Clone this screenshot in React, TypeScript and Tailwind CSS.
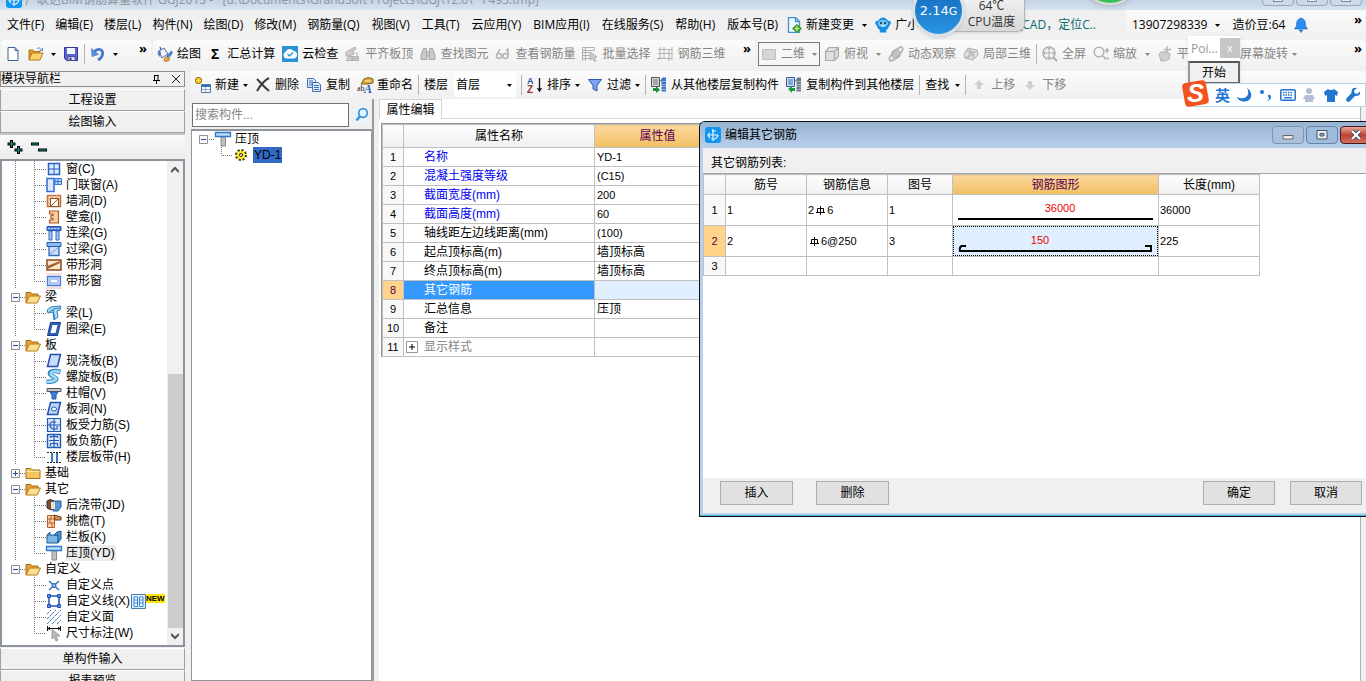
import type { ReactNode } from "react";

const UI = "font-['Open_Sans','Noto_Sans_CJK_SC',sans-serif]";
const SONG = "font-['Liberation_Sans','Noto_Sans_CJK_SC',sans-serif]";

const icons: Record<string, ReactNode> = {
  file: <path d="M3 1.5h7l3 3v10H3z M10 1.5v3h3" fill="#fdfeff" stroke="#3f618f" />,
  open: <g><path d="M1 14V4h4l1 1.5h6V8" fill="#d9982e" stroke="#b87a20" /><path d="M1 14 4 7h11l-3 7z" fill="#fbd36e" stroke="#b87a20" /><path d="M9 2.5q3-2 4 1M14.5 2v2.500h-3" fill="none" stroke="#5d7fae" /></g>,
  save: <g><path d="M1.500 1.500h13v13h-11l-2-2z" fill="#5c68d2" stroke="#3238a0" /><path d="M4 2h8v6H4z" fill="#f4f5ff" /><path d="M5 10.500h7v4H5z" fill="#dfe3ee" stroke="#2a2f80" strokeWidth=".7" /><path d="M6.500 11.500h2v2.500h-2z" fill="#333a90" /></g>,
  undo: <g><path d="M4 6C8 1.500 13.500 3 12.500 8.500 12 11 10 13 8 14" fill="none" stroke="#4478d0" strokeWidth="2.800" /><path d="M1.500 2.500 2 10.500l6.500-2z" fill="#5b92e2" stroke="#3c6fc4" strokeWidth=".6" /></g>,
  paint: <g><path d="m2 5 5-3 4 6-6 4z" fill="#eef3fb" stroke="#4a6b9c" /><path d="M1 4.500Q0 9 3 11L4 6z" fill="#567dbd" /><path d="M4 4 3 1M15 5l-5 6" stroke="#3f5e8c" strokeWidth="1.200" fill="none" /><path d="M7 15c0-4 3-5 5-3s-1 4-5 3z" fill="#e5a93a" stroke="#98651c" strokeWidth=".7" /><path d="m10 9 4-4 2 2-4 5z" fill="#4d84cf" /></g>,
  cloud: <g><path d="M0 0h16v16H0z" fill="#2b91d6" /><path d="M4 12.500a3.500 3.500 0 0 1-.5-6.500 4.500 4.500 0 0 1 8-1A3.800 3.800 0 0 1 12 12.500z" fill="#fff" /><path d="m5.500 8 2 2L11 6.500" fill="none" stroke="#2b91d6" strokeWidth="1.400" /></g>,
  align: <g fill="#d0d0d0" stroke="#b0b0b0"><path d="m1 6 9-5 1 2-5 3h3v2L4 10H1z" /><path d="M3.500 10.500h10v4h-12z M5 12.500h8M8 10.500v4M12 6v5" /></g>,
  find: <g fill="#c9c9c9" stroke="#a8a8a8"><path d="M3.500 2.500h3v4l.5 7H1V9z M9.500 2.500h3L15 9v4.500H9l.5-7z" /><path d="M6.500 6h3v4h-3z" /></g>,
  glasses: <g fill="none" stroke="#b4b4b4" strokeWidth="1.500"><circle cx="4" cy="10" r="2.500" /><circle cx="10.500" cy="10" r="2.500" /><path d="M1.500 9.500 5 3M13 10V3l-2 2M6.500 9.500h1.500" /></g>,
  batch: <g fill="none" stroke="#b0b0b0"><path d="M.5 1.500h12v3H.5z M.5 6.500h7M.5 9.500h7M.5 12.500h8M3.500 1v14M.5 1v14" /><path d="m8 6 7 5-3 .5 2 3-1.500 1-2-3L8 14z" fill="#ccc" /></g>,
  cage: <g fill="none" stroke="#b4b4b4"><path d="M3 1v12M7 1v12M12 3v12M15 1v13M1 3.500l14 0M1 7.500h14M0 12.500h13M1 14 4 11M12 14l3-3" /></g>,
  rect: <path d="M1.500 3.500h13v10h-13z" fill="#d6d6d6" stroke="#c0c0c0" />,
  cube: <path d="M1.500 5.500 5 1.500h9.500v9l-4 4h-9z M1.500 5.500h9v9M10.500 5.500l4-4" fill="#dedede" stroke="#aaa" strokeWidth="1.200" />,
  orbit: <g fill="#c4c4c4" stroke="#b2b2b2"><circle cx="8" cy="8" r="4.500" /><ellipse cx="8" cy="8" rx="9" ry="3" transform="rotate(-45 8 8)" fill="none" strokeWidth="1.500" /></g>,
  region: <path d="m1 8 4-6 9 2 1 5-5 5-8-2z M5 2l4 7M9 9 2 12M9 9l5-5M3 5l8 2M5 12 8 4M11 13l-1-8" fill="#dedede" stroke="#b2b2b2" />,
  full: <g fill="none" stroke="#adadad"><circle cx="7" cy="7" r="6" strokeWidth="1.500" /><path d="M7 2v10M2 7h10M5.500 3.500 7 2l1.500 1.500M5.500 10.500 7 12l1.500-1.500M3.500 5.500 2 7l1.500 1.500M10.500 5.500 12 7l-1.500 1.500" /><path d="m11.500 11.500 3.500 3.500" strokeWidth="2" /></g>,
  zoom: <g fill="none" stroke="#b2b2b2"><circle cx="6" cy="6" r="4.800" strokeWidth="1.500" /><path d="m10 10 2 2M14 2v5M11.500 4.500H16M11 12.500h5" strokeWidth="1.500" /></g>,
  pan: <g fill="#cfcfcf" stroke="#b2b2b2"><path d="M2 8c1-3 9-3 11 0l-1 5-4 2H4z" /><path d="M10 0v7M7 3.500h7" strokeWidth="1.300" /></g>,
  create: <g><path d="M3.500 0v7M0 3.500h7" stroke="#a57b0e" strokeWidth="4" /><path d="M3.500 1v5M1 3.500h5" stroke="#ffe23f" strokeWidth="2" /><path d="M6.500 7.500h9v8h-9z" fill="#f8fbff" stroke="#56789f" /><path d="M7 8h8v2H7z" fill="#2f70c7" /><path d="M7 12.500h8M10.500 10v5" stroke="#91abc8" /></g>,
  remove: <path d="M2 2c3 3 6 7 12 12M14 1C10 3 5 9 2 14" fill="none" stroke="#3b3b3b" strokeWidth="2" />,
  copy: <g fill="#dceafe" stroke="#456fb4"><path d="M1.500 1.500h6l2 2v7h-8z M3 4h4M3 6h5M3 8h5" /><path d="M6.500 5.500h6l2 2v7h-8z M8 8.500h5M8 10.500h5M8 12.500h5" /></g>,
  rename: <g><path d="m4 7 3-5q5-3 9 0v4l-5 1z" fill="#d8a638" stroke="#7c601c" /><path d="M8 4h6" stroke="#fff0b0" /><text x="0" y="14" fontSize="8" fontFamily="Liberation Serif" fill="#222">ab</text><text x="7" y="16" fontSize="12" fontStyle="italic" fontWeight="bold" fontFamily="Liberation Serif" fill="#2761c1">A</text></g>,
  sort: <g><text x="0" y="7" fontSize="9" fontWeight="bold" fontFamily="Liberation Sans" fill="#2a5aa5">A</text><text x="0" y="16" fontSize="10" fontWeight="bold" fontFamily="Liberation Sans" fill="#9d3535">Z</text><path d="M12.500 1v13M10.500 11l2 3 2-3" fill="none" stroke="#111" strokeWidth="1.300" /></g>,
  filter: <path d="M1.500 2.500h13L10 8.500V14l-4-2V8.500z" fill="#7da4f0" stroke="#2855ae" />,
  copyFrom: <g><path d="M.5.5h8v9h-8z" fill="#d7d7d7" stroke="#555" /><path d="M2 3h5M2 5h5M2 7h5" stroke="#777" /><path d="M15 1.500h-3l-1.500 2H15M10.500 6H15M10.500 8.500H15M10.500 11H15M10.500 13.500H15" stroke="#3976c6" fill="none" strokeWidth="1.800" /><path d="m2 12 4-3v2h3v3H6v2z" fill="#16913c" transform="rotate(180 5.500 12.500)" /></g>,
  copyTo: <g><path d="M.5.5h8v9h-8z" fill="#cfe0fa" stroke="#31589b" /><path d="M2 3h5M2 5h5M2 7h5" stroke="#456aaa" /><path d="M15 1.500h-3l-1.500 2H15M10.500 6H15M10.500 8.500H15M10.500 11H15M10.500 13.500H15" stroke="#68798c" fill="none" strokeWidth="1.800" /><path d="m2 12 4-3v2h3v3H6v2z" fill="#16a13c" /></g>,
  up: <path d="m8 3 5 5h-3v4H6V8H3z" fill="#cfcfcf" />,
  down: <path d="m8 13 5-5h-3V4H6v4H3z" fill="#cfcfcf" />,
  change: <g><path d="M2.500.5h7l4 4v11h-11z M9.500.5v4h4" fill="#f4faff" stroke="#3f91cf" strokeWidth="1.300" /><path d="m11 7 5 4.500L11 16l-5-4.500z" fill="#359920" /><path d="M11 9v5M8.500 11.500h5" stroke="#b8ef8e" strokeWidth="1.400" /></g>,
  robot: <g><path d="M0 6q1-3 3-2 2-3.500 5-3.500T13 4q2-1 3 2l-2 3.500q-1 3-3 3.500l.5 2.500h-7L5 13Q3 12.500 2 9.500z" fill="#168de2" /><ellipse cx="8" cy="6.500" rx="5" ry="3.500" fill="#74c8f6" /><circle cx="6" cy="6" r="1" fill="#123" /><circle cx="10" cy="6" r="1" fill="#123" /><path d="M6 8.500q2 1.500 4 0" stroke="#fff" fill="none" /></g>,
  bell: <path d="M8 1q5 1 4.500 8l2 3h-13l2-3Q3 2 8 1zM6 13h4l-2 2.500z" fill="#2a8df1" stroke="#1469bd" strokeWidth=".6" />,
  folderOpen: <g><path d="M1 14V3.500h5L7 5h6v3" fill="#e0a53c" stroke="#a8701c" /><path d="M1 14 4.500 7h11L12 14z" fill="#fde08a" stroke="#b87a20" /></g>,
  folder: <g><path d="M1 13.500v-10h5L7.500 5H15v8.500z" fill="#f3c55c" stroke="#a8701c" /><path d="M1.500 6.500h13" stroke="#fdeab1" /></g>,
  win: <g><path d="M2.500 2.500h11v11h-11z" fill="#dcebff" stroke="#2a5fc8" strokeWidth="1.500" /><path d="M8 3v10M3 8h10" stroke="#2a5fc8" /></g>,
  doorwin: <g><path d="M1 1.500h7v13H1z" fill="#dceaff" stroke="#3970d6" strokeWidth="1.600" /><path d="M9 1.500h6.500v6H9z M12 1v7M9 4.500h6" fill="#bcd5ff" stroke="#3970d6" /></g>,
  hole: <g><path d="M1.500 2.500h13v11h-13z" fill="#fbd7b5" stroke="#c07340" strokeWidth="1.500" /><path d="M2 6h12M2 10h12M6 2v12M11 2v12" stroke="#e4a77a" /><path d="M4.500 5.500h8v8h-8z" fill="#fffdf7" stroke="#8b5122" /><path d="m5 13 7-7" stroke="#9b5a23" /></g>,
  niche: <path d="M3.500 2h9v12h-9v-3H7V9.500H5v-3h2V5H3.500z" fill="#f8cda6" stroke="#b35a20" strokeWidth="1.200" />,
  linkBeam: <g><path d="M1 1.500h14v4H1z" fill="#4b80d8" stroke="#2452aa" /><path d="M3 6h3v9H3z M10 6h3v9h-3z" fill="#a8c8f5" stroke="#3569c1" /><path d="M2 3.500h12" stroke="#bad4ff" strokeDasharray="2 1" /></g>,
  lintel: <g><path d="M3 5h10v9.500H3z" fill="#cfe0fa" stroke="#2e68b8" strokeWidth="1.300" /><path d="M1 1.500h14v4H1z" fill="#8dbcf2" stroke="#2459aa" /><path d="m4 13 8-6" stroke="#6aa0dc" /></g>,
  stripHole: <g><path d="M1 3h14v10H1z" fill="#fbe6ce" stroke="#8a4a1c" strokeWidth="1.500" /><path d="M1.500 12V9L14 4v2z" fill="#a85c28" /></g>,
  stripWin: <g><path d="M1.500 3.500h13v9h-13z" fill="#cfe1ff" stroke="#4979d8" strokeWidth="1.300" /><path d="M4 6h8v4H4z" fill="#fff" stroke="#7aa3e8" /><path d="M0 1h16M0 15h16" stroke="#f3b7ab" /></g>,
  beam: <g fill="#b5dcf5" stroke="#2782be"><path d="m1 5 4-3 10-1-1 4-3 1 1 6-4 3-1-8-5 1z" /><path d="m3 7 5-3 6-1M7 5l2 9" fill="none" /></g>,
  ring: <g><path d="M4.500 1.500h10l-3 13h-10z" fill="#315fb8" stroke="#173f91" /><path d="M6.500 4h5l-2 8h-5z" fill="#fff" /></g>,
  slab: <path d="M4.500 1.500h10l-3 12h-10z" fill="#c9dcfa" stroke="#1e50b0" strokeWidth="1.500" />,
  spiral: <g fill="none"><path d="M14.500 3C4 0 1 5 7 7.500s3 5-6.500 5.500" stroke="#2887c6" strokeWidth="4.500" /><path d="M14 3C5 .5 2 5 7.500 7.500S9.500 12.500 1 13" stroke="#a8daf6" strokeWidth="2.600" /></g>,
  cap: <g><path d="M1 3.500h14v3H1z" fill="#c8c8c8" stroke="#555" /><path d="M4 7h8l-2 3v4H6v-4z" fill="#3e84db" stroke="#2459aa" /></g>,
  slabHole: <g><path d="M4.500 1.500h10l-3 12h-10z" fill="#bfd6fa" stroke="#1e50b0" strokeWidth="1.500" /><ellipse cx="8" cy="8" rx="2.500" ry="2" fill="#fff" stroke="#2358b5" /></g>,
  forceBar: <g fill="none" stroke="#205ab3"><path d="M1.500 1.500h13v13h-13z" fill="#d8e6fa" strokeWidth="1.200" /><path d="M8 2v12M2 8h12M10 5H6q-2 0-2 3t3 4h4V9" strokeWidth="1.100" /></g>,
  negBar: <g fill="none" stroke="#205ab3"><path d="M1.500 1.500h13v13h-13z" fill="#dae8fb" strokeWidth="1.400" /><path d="M3 7.500h10M8 2v12M4.500 13v-2.500h7V13M4.500 5V3.500h7V5" strokeWidth="1.200" /></g>,
  band: <g fill="none" stroke="#2b66b8"><path d="M1 3.500h14M1 13.500h14" stroke="#222" strokeDasharray="2 1" /><path d="M6 4v9M11 4v9" strokeWidth="1.800" /></g>,
  postCast: <g><path d="M1 4q3-3 7 0v8q-3 2-7-1z" fill="#7a4d32" stroke="#492c1d" /><path d="M7 4h8v6l-3 4H7z" fill="#5394d7" stroke="#285f9d" /><path d="M5 5h4v7H5z" fill="#eedecb" /></g>,
  eave: <g><path d="M1.500 2.500h7v12h-7z M2 6h6M2 10h6M5 2v4M4 6v4M6 10v4" fill="#fbd1a9" stroke="#b35f2b" /><path d="m8 2 7 2v3H9z" fill="#d08d59" stroke="#713d1c" /></g>,
  rail: <g><path d="M1 6h11v8H1z" fill="#7cb8e7" stroke="#205a94" /><path d="m1 6 3-3v3M8 6l3-3 4-1v8l-3 4V6z" fill="#4b90cf" stroke="#205a94" /></g>,
  coping: <g><path d="M6 6h4.500v9H6z" fill="#c0c0c0" stroke="#8a8a8a" /><path d="M.5 1.500h15v4H.5z" fill="#b9dcf8" stroke="#3178c7" strokeWidth="1.300" /></g>,
  point: <g><path d="m3 4 10 9M13 4 3 13" stroke="#2d67ae" strokeWidth="1.300" /><circle cx="8" cy="8.500" r="2" fill="#7ebcf0" stroke="#205ea9" /></g>,
  line: <g stroke="#2054b2"><path d="M3 3h10v10H3z" fill="none" strokeWidth="1.500" /><path d="M1.500 1.500h3v3h-3zM11.500 1.500h3v3h-3zM1.500 11.500h3v3h-3zM11.500 11.500h3v3h-3z" fill="#5590e5" /></g>,
  area: <path d="m1 5 4-4M1 10l9-9M1 15 15 1M6 15l9-9M11 15l4-4" stroke="#4a78c2" strokeDasharray="3 .7" />,
  dim: <g><path d="M1.500 1v5M14.500 1v5M1 3.500h14M4 2 2 3.500 4 5M12 2l2 1.500L12 5" stroke="#111" fill="none" /><path d="m6 4 8 7h-4l2 4-2 1-2-4-2 2z" fill="#bbb" stroke="#888" strokeWidth=".7" /></g>,
  gear: <g><circle cx="8" cy="8" r="4.500" fill="#ffe71c" stroke="#3f3b00" strokeWidth="3" strokeDasharray="2 1.500" /><circle cx="8" cy="8" r="4" fill="#ffeb25" /><circle cx="8" cy="8" r="1.500" fill="#fff" stroke="#222" /></g>,
  search: <g fill="none" stroke="#3a94da"><circle cx="9" cy="6" r="4.300" strokeWidth="1.800" fill="#e6f5ff" /><path d="m6 9-3.500 4.500" strokeWidth="2.500" /></g>,
  app: <g><rect width="16" height="16" rx="3" fill="#1195ee" /><path d="M8 2v12M3 8h10M5 6Q3 7 3 8t2 3M7 4h4M6 12h4q3-2 3-4" stroke="#e9f8ff" fill="none" strokeWidth="1.200" /></g>,
  moon: <path d="M11 1c4 7-2 13-10 9 1 5 12 7 14 0 1-4-1-7-4-9z" fill="#2176d2" />,
  punct: <g fill="#2176d2"><circle cx="4" cy="5" r="2" /><path d="M10 8q3-1 3 2 0 3-4 4 2-1 2-3-1 0-1-3z" /></g>,
  keys: <g><rect x=".8" y="2.800" width="14.400" height="10.400" rx="1" fill="#fff" stroke="#2176d2" strokeWidth="1.500" /><path d="M3 5.500h10M3 8h10" stroke="#2176d2" strokeWidth="1.400" strokeDasharray="1.500 1" /><path d="M4 10.800h8" stroke="#2176d2" strokeWidth="1.400" /></g>,
  person: <path d="M8 1a3 3 0 1 1 0 6 3 3 0 0 1 0-6zM4 8h8l2 4H12v3H4v-3H2z" fill="#b3bed2" />,
  shirt: <path d="M5 2q3 2 6 0l4 3-1 4-2-1v7H4V8L2 9 1 5z" fill="#2176d2" />,
  wrench: <path d="M15 4.500 12 7 9.500 6 9 3.500 12 1Q6 0 6.500 6L1 12q0 3 3 3l6-6q6 0 5-4.500z" fill="#2176d2" />,
};

function Ico({ n }: { n: string }) {
  return <svg aria-hidden="true" className="size-4 shrink-0 overflow-visible" viewBox="0 0 16 16">{icons[n]}</svg>;
}

function Caret() {
  return <svg aria-hidden="true" className="h-[3px] w-[5px] shrink-0" viewBox="0 0 5 3"><path d="M0 0h5L2.500 3z" fill="currentColor" /></svg>;
}

function Sep({ tight }: { tight?: boolean }) {
  return <span className={"h-5 w-px shrink-0 bg-[#b4b4b4]" + (tight ? " -mx-0.5" : "")} />;
}

function More() {
  return <button aria-label="更多" className="pb-3 text-[13px] leading-none font-bold">»</button>;
}

function Tool({ icon, label, gray, caret }: { icon: string; label: string; gray?: boolean; caret?: boolean }) {
  return (
    <button className={"flex shrink-0 items-center gap-1 whitespace-nowrap " + (gray ? "text-[#858585]" : "text-black")}>
      <Ico n={icon} />
      <span>{label}</span>
      {caret && <Caret />}
    </button>
  );
}

const editMenus = ["文件(F)", "编辑(E)", "楼层(L)", "构件(N)", "绘图(D)", "修改(M)", "钢筋量(Q)"];
const serviceMenus = ["视图(V)", "工具(T)", "云应用(Y)", "BIM应用(I)", "在线服务(S)", "帮助(H)", "版本号(B)"];

function MenuBar() {
  return (
    <nav className="flex h-[30px] shrink-0 items-center bg-[#f0f0f0]">
      <div className="flex min-w-0 flex-1 items-center gap-3 overflow-hidden pl-[7px] whitespace-nowrap">
        <div className="flex shrink-0 gap-[11px]">
          {editMenus.map((m) => <button key={m} className="shrink-0">{m}</button>)}
        </div>
        <div className="flex shrink-0 gap-3">
          {serviceMenus.map((m) => <button key={m} className="shrink-0">{m}</button>)}
        </div>
        <div className="-ml-1 flex items-center gap-2">
          <Tool icon="change" label="新建变更" />
          <Caret />
          <Tool icon="robot" label="广小" />
        </div>
        <a href="#cad" className="ml-auto pr-[30px] text-[#0a6b70]">_CAD，定位C..</a>
      </div>
      <div className="flex h-full w-[240px] shrink-0 items-center gap-2 bg-linear-to-b from-[#fafafa] to-[#f0f0f0] pl-[6px]">
        <button className="flex items-center gap-2">13907298339<Caret /></button>
        <span className="pl-1">造价豆:64</span>
        <Ico n="bell" />
        <span className="ml-auto pr-1"><More /></span>
      </div>
    </nav>
  );
}

const bar = "flex items-center rounded bg-linear-to-b from-[#fbfbfb] to-[#f0f0f0]";

function MainToolbar() {
  return (
    <div className="flex h-7 shrink-0 gap-[2px] overflow-hidden pl-px">
      <div className={bar + " w-[150px] shrink-0 gap-[7px] pl-1"}>
        <button aria-label="新建"><Ico n="file" /></button>
        <button aria-label="打开" className="flex items-center gap-[7px]"><Ico n="open" /><Caret /></button>
        <button aria-label="保存"><Ico n="save" /></button>
        <Sep tight />
        <button aria-label="撤销" className="flex items-center gap-[7px]"><Ico n="undo" /><Caret /></button>
        <span className="ml-auto pr-1"><More /></span>
      </div>
      <div className={bar + " w-[602px] shrink-0 gap-[7px] pl-1"}>
        <Tool icon="paint" label="绘图" />
        <button className="flex items-center gap-2 pl-[3px]"><span className="text-[14px] leading-none font-bold">Σ</span>汇总计算</button>
        <Tool icon="cloud" label="云检查" />
        <Tool icon="align" label="平齐板顶" gray />
        <Tool icon="find" label="查找图元" gray />
        <Tool icon="glasses" label="查看钢筋量" gray />
        <Tool icon="batch" label="批量选择" gray />
        <Tool icon="cage" label="钢筋三维" gray />
        <span className="ml-auto pr-1"><More /></span>
      </div>
      <div className={bar + " min-w-0 flex-1 gap-[7px] pl-px"}>
        <div className="-mr-[3px] flex h-6 w-[62px] shrink-0 items-center gap-1 border border-[#777] bg-[#f6f6f6] px-[2px] text-[#858585]">
          <Ico n="rect" />
          <select aria-label="视图模式" className="min-w-0 flex-1 appearance-none bg-transparent"><option>二维</option></select>
          <Caret />
        </div>
        <span className="flex items-center gap-2 text-[#858585]"><Tool icon="cube" label="俯视" gray /><Caret /></span>
        <Tool icon="orbit" label="动态观察" gray />
        <Tool icon="region" label="局部三维" gray />
        <Sep tight />
        <Tool icon="full" label="全屏" gray />
        <span className="flex items-center gap-2 text-[#858585]"><Tool icon="zoom" label="缩放" gray /><Caret /></span>
        <Tool icon="pan" label="平移" gray />
        <span className="pl-3"><Tool icon="orbit" label="屏幕旋转" gray caret /></span>
        <span className="ml-auto pr-1"><More /></span>
      </div>
    </div>
  );
}

function PartToolbar() {
  return (
    <div className={bar + " h-7 shrink-0 gap-[7px] overflow-hidden pl-1"}>
      <Tool icon="create" label="新建" caret />
      <Tool icon="remove" label="删除" />
      <Tool icon="copy" label="复制" />
      <Tool icon="rename" label="重命名" />
      <Sep tight />
      <label className="flex shrink-0 items-center gap-[6px]">
        <span>楼层</span>
        <span className="flex h-6 w-[62px] items-center bg-white pr-1 pl-[2px]">
          <select className="min-w-0 flex-1 appearance-none bg-transparent"><option>首层</option></select>
          <Caret />
        </span>
      </label>
      <Sep tight />
      <Tool icon="sort" label="排序" caret />
      <Tool icon="filter" label="过滤" caret />
      <Sep tight />
      <Tool icon="copyFrom" label="从其他楼层复制构件" />
      <Tool icon="copyTo" label="复制构件到其他楼层" />
      <Sep tight />
      <button className="flex shrink-0 items-center gap-[6px]">查找<Caret /></button>
      <Sep tight />
      <Tool icon="up" label="上移" gray />
      <Tool icon="down" label="下移" gray />
    </div>
  );
}

type Node = { t: string; i: string; sel?: boolean; isNew?: boolean };
type Group = { name?: string; closed?: boolean; last?: boolean; items: Node[] };

const tree: Group[] = [
  { items: [
    { t: "窗(C)", i: "win" }, { t: "门联窗(A)", i: "doorwin" }, { t: "墙洞(D)", i: "hole" }, { t: "壁龛(I)", i: "niche" },
    { t: "连梁(G)", i: "linkBeam" }, { t: "过梁(G)", i: "lintel" }, { t: "带形洞", i: "stripHole" }, { t: "带形窗", i: "stripWin" },
  ] },
  { name: "梁", items: [{ t: "梁(L)", i: "beam" }, { t: "圈梁(E)", i: "ring" }] },
  { name: "板", items: [
    { t: "现浇板(B)", i: "slab" }, { t: "螺旋板(B)", i: "spiral" }, { t: "柱帽(V)", i: "cap" }, { t: "板洞(N)", i: "slabHole" },
    { t: "板受力筋(S)", i: "forceBar" }, { t: "板负筋(F)", i: "negBar" }, { t: "楼层板带(H)", i: "band" },
  ] },
  { name: "基础", closed: true, items: [] },
  { name: "其它", items: [
    { t: "后浇带(JD)", i: "postCast" }, { t: "挑檐(T)", i: "eave" }, { t: "栏板(K)", i: "rail" }, { t: "压顶(YD)", i: "coping", sel: true },
  ] },
  { name: "自定义", last: true, items: [
    { t: "自定义点", i: "point" }, { t: "自定义线(X)", i: "line", isNew: true }, { t: "自定义面", i: "area" }, { t: "尺寸标注(W)", i: "dim" },
  ] },
];

function Expander({ plus }: { plus?: boolean }) {
  return (
    <svg aria-hidden="true" className="size-[9px] shrink-0" viewBox="0 0 9 9">
      <path d="M.5.5h8v8h-8z" fill="#f8f8f8" stroke="#8f8f8f" />
      <path d={plus ? "M2 4.500h5M4.500 2v5" : "M2 4.500h5"} stroke="#2a4fa0" />
    </svg>
  );
}

function Guide({ end, blank, stem }: { end?: boolean; blank?: boolean; stem?: boolean }) {
  return (
    <svg aria-hidden="true" className="h-4 w-3 shrink-0" viewBox="0 0 12 16">
      {!blank && <path d={stem ? "M.5 0v16" : end ? "M.5 0v8.500h11" : "M.5 0v16M1 8.500h11"} fill="none" stroke="#777" strokeDasharray="1 1" />}
    </svg>
  );
}

function NavTree() {
  return (
    <div className="flex h-[488px] shrink-0 border-2 border-[#8c939c] bg-white">
      <ul className="min-w-0 flex-1 overflow-hidden pl-[10px]">
        {tree.map((g, gi) => (
          <li key={gi}>
            {g.name && (
              <button className="-ml-px flex h-4 items-center whitespace-nowrap">
                <Expander plus={g.closed} />
                <span className="w-[5px] border-t border-dotted border-[#777]" />
                <Ico n={g.closed ? "folder" : "folderOpen"} />
                <span className="pl-1">{g.name}</span>
              </button>
            )}
            <ul>
              {g.items.map((n, k) => (
                <li key={n.t} className="flex h-4 items-center pl-[3px]">
                  <Guide stem blank={g.last} />
                  <span className="w-[7px] shrink-0" />
                  <Guide end={k === g.items.length - 1} />
                  <button className="flex h-4 items-center gap-1 whitespace-nowrap">
                    <Ico n={n.i} />
                    <span className={n.sel ? "bg-[#ececec] pr-px" : ""}>{n.t}</span>
                  </button>
                  {n.isNew && (
                    <span className="flex items-start pl-px">
                      <svg aria-hidden="true" className="size-[15px]" viewBox="0 0 15 15"><path d="M.5.5h14v14H.5z" fill="#d9edff" stroke="#4a7ca8" /><path d="M3 3h3.500v9.500H3zM8.500 3H12v9.500H8.500zM3 6h3M3 9h3M9 6h3M9 9h3" fill="#fff" stroke="#3388d6" /></svg>
                      <span className="bg-[#ffe600] text-[8px] leading-[9px] font-bold">NEW</span>
                    </span>
                  )}
                </li>
              ))}
            </ul>
          </li>
        ))}
      </ul>
      <div className="flex w-4 shrink-0 flex-col items-center bg-[#f0f0f0] py-[5px]">
        <svg aria-hidden="true" className="size-2" viewBox="0 0 8 8"><path d="m0 6 4-4 4 4" fill="none" stroke="#555" strokeWidth="2" /></svg>
        <div className="flex-1" />
        <div className="mb-1 h-[254px] w-[15px] bg-[#cdcdcd]" />
        <svg aria-hidden="true" className="size-2" viewBox="0 0 8 8"><path d="m0 2 4 4 4-4" fill="none" stroke="#555" strokeWidth="2" /></svg>
      </div>
    </div>
  );
}

const navBtn = "h-[22px] shrink-0 border border-t-white border-r-[#a0a0a0] border-b-[#a0a0a0] border-l-[#a0a0a0] bg-[#f0f0f0]";

function NavPanel() {
  return (
    <aside className={SONG + " mr-px flex w-[185px] shrink-0 flex-col overflow-hidden"}>
      <header className="mt-[2px] flex h-4 shrink-0 items-center border border-[#8a8f88] bg-[#f0f0f0]">
        <h2>模块导航栏</h2>
        <button aria-label="固定" className="ml-auto">
          <svg aria-hidden="true" className="h-[9px] w-[7px]" viewBox="0 0 7 9"><path d="M1.500 0v5M1.500.5h4M5 0v5M0 5.500h7M3.500 6v3" stroke="#000" fill="none" /></svg>
        </button>
        <button aria-label="关闭" className="mr-1 ml-3">
          <svg aria-hidden="true" className="size-2" viewBox="0 0 8 8"><path d="m0 0 8 8M8 0 0 8" stroke="#222" /></svg>
        </button>
      </header>
      <button className={navBtn + " mt-[2px]"}>工程设置</button>
      <button className={navBtn}>绘图输入</button>
      <div className="flex h-[26px] shrink-0 items-center gap-2 border-t-2 border-[#c4c4c4] bg-linear-to-b from-[#fafafa] to-[#ececec] pl-[7px]">
        <button aria-label="全部展开"><svg aria-hidden="true" className="size-4" viewBox="0 0 16 16"><path d="M4.500 1v8M.5 5h8M11.500 7v8M7.500 11h8" stroke="#000" strokeWidth="3" /><path d="M4.500 2v6M1.500 5h6M11.500 8v6M8.500 11h6" stroke="#159a8c" /></svg></button>
        <button aria-label="全部折叠"><svg aria-hidden="true" className="size-4" viewBox="0 0 16 16"><path d="M0 5h8M7 11h9" stroke="#000" strokeWidth="3" /><path d="M1 5h6M8 11h7" stroke="#159a8c" /></svg></button>
      </div>
      <NavTree />
      <button className={navBtn + " mt-px"}>单构件输入</button>
      <button className={navBtn}>报表预览</button>
    </aside>
  );
}

function PartPanel() {
  return (
    <section className={SONG + " flex w-[183px] shrink-0 flex-col border-r-2 border-[#9a9a9a]"}>
      <div className="flex h-[30px] shrink-0 items-center gap-[5px] pt-[2px] pl-px">
        <input aria-label="搜索构件" placeholder="搜索构件..." className="h-6 w-[157px] border border-[#707070] bg-white px-[2px] placeholder:text-[#858585]" />
        <button aria-label="搜索" className="rounded bg-[#eaf4fc]"><Ico n="search" /></button>
      </div>
      <div className="flex-1 border border-t-2 border-[#8f959d] bg-white pl-[7px]">
        <div className="flex h-4 items-center">
          <Expander />
          <span className="mx-px w-[5px] border-t border-dotted border-[#777]" />
          <Ico n="coping" />
          <button className="pl-1">压顶</button>
        </div>
        <div className="flex h-4 items-center pl-[22px]">
          <Guide end />
          <Ico n="gear" />
          <button className="ml-1 h-4 bg-[#316ac5] px-px">YD-1</button>
        </div>
      </div>
    </section>
  );
}

const cell = "border border-[#c0c0c0] p-0 font-normal leading-none";
const headBg = " bg-linear-to-b from-[#fdfdfd] to-[#f0f0f0]";
const goldBg = " bg-linear-to-b from-[#fbd89c] to-[#f1bf61] text-[#5b0050]";

const props = [
  ["名称", "YD-1", "text-[#0000ee]"],
  ["混凝土强度等级", "(C15)", "text-[#0000ee]"],
  ["截面宽度(mm)", "200", "text-[#0000ee]"],
  ["截面高度(mm)", "60", "text-[#0000ee]"],
  ["轴线距左边线距离(mm)", "(100)", ""],
  ["起点顶标高(m)", "墙顶标高", ""],
  ["终点顶标高(m)", "墙顶标高", ""],
  ["其它钢筋", "", "text-white"],
  ["汇总信息", "压顶", ""],
  ["备注", "", ""],
  ["显示样式", "", "text-[#858585]"],
];

function PropertyPanel() {
  return (
    <section className={SONG + " mr-[5px] ml-[5px] flex min-w-0 flex-1 flex-col border-r border-[#b0b0b0] bg-white"}>
      <div className="flex h-5 shrink-0 border-b border-[#dadada]">
        <button className="h-5 w-[63px] border border-b-0 border-[#d4d4d4] bg-white">属性编辑</button>
      </div>
      <div className="mt-1 ml-[2px] border-t border-l border-[#8f959d]">
        <table className="w-[338px] table-fixed border-collapse">
          <colgroup><col className="w-[21px]" /><col className="w-[191px]" /><col className="w-[126px]" /></colgroup>
          <thead>
            <tr className="h-[23px]">
              <th className={cell + headBg} aria-label="序号" />
              <th className={cell + headBg}>属性名称</th>
              <th className={cell + goldBg}>属性值</th>
            </tr>
          </thead>
          <tbody>
            {props.map(([name, value, color], i) => (
              <tr key={name} className="h-[19px]">
                <th className={cell + (i === 7 ? " bg-[#ffd48a] text-[#5b0050]" : " bg-[#f8f8f8]") + " text-[11px]"}>{i + 1}</th>
                <td className={cell + " " + color + (i === 7 ? " bg-[#3399ff]" : "")}>
                  <div className="flex items-center">
                    <span className="flex w-5 shrink-0 pl-[2px]">
                      {i === 10 && (
                        <svg aria-hidden="true" className="size-3" viewBox="0 0 12 12"><path d="M.5.5h11v11H.5z" fill="#fff" stroke="#999" /><path d="M3 6h6M6 3v6" stroke="#000" /></svg>
                      )}
                    </span>
                    <span>{name}</span>
                  </div>
                </td>
                <td className={cell + " pl-[2px]" + (i === 7 ? " bg-[#dfefff]" : "") + (i < 5 ? " text-[11px]" : "")}>{value}</td>
              </tr>
            ))}
          </tbody>
        </table>
      </div>
    </section>
  );
}

function Rebar() {
  return <svg role="img" aria-label="三级钢" className="h-[9px] w-[9px]" viewBox="0 0 9 9"><path d="M4.500 0v9M0 6.500h9M1.500 6V2.500h6V6" fill="none" stroke="#000" /></svg>;
}

const dlgBtn = "h-6 border border-[#adadad] bg-[#e1e1e1]";

function RebarDialog() {
  return (
    <div role="dialog" aria-label="编辑其它钢筋" className={SONG + " absolute top-[121px] right-0 left-[699px] flex flex-col overflow-hidden rounded-tl-md border border-r-0 border-[#111] bg-[#b8d0ec] pl-[3px]"}>
      <header className={UI + " -ml-[3px] flex h-[26px] items-center gap-1 bg-linear-to-b from-[#97b3d1] to-[#b9d0ea] pl-[5px]"}>
        <Ico n="app" />
        <h2 className="flex-1">编辑其它钢筋</h2>
        <div className="-mr-[6px] flex gap-[2px]">
          <button aria-label="最小化" className="flex h-[18px] w-8 items-center justify-center rounded-sm border border-[#7d95b3] bg-[#a9c1dc]"><svg aria-hidden="true" className="h-4 w-4" viewBox="0 0 16 16"><path d="M3 8.500h10v3.500H3z" fill="#eee" stroke="#666" /></svg></button>
          <button aria-label="最大化" className="flex h-[18px] w-8 items-center justify-center rounded-sm border border-[#6684a8] bg-[#9fbcdc]"><svg aria-hidden="true" className="h-4 w-4" viewBox="0 0 16 16"><path d="M3 3.500h10v8.500H3z" fill="#eee" stroke="#47566b" /><path d="M6 6.500h4v2.500H6z" fill="#8fb0d4" stroke="#47566b" /></svg></button>
          <button aria-label="关闭" className="flex h-[18px] w-8 items-center justify-center rounded-sm border border-[#4a1620] bg-linear-to-b from-[#e3a79c] via-[#bf4130] to-[#d0705c]"><svg aria-hidden="true" className="h-4 w-4" viewBox="0 0 16 16"><path d="m4 4 8 8M12 4l-8 8" stroke="#444c60" strokeWidth="4" /><path d="m4 4 8 8M12 4l-8 8" stroke="#fff" strokeWidth="2.200" /></svg></button>
        </div>
      </header>
      <p className="flex h-[25px] items-center bg-[#f0f0f0] pt-1 pl-2">其它钢筋列表:</p>
      <div className="h-[305px] border-t border-[#a5a5a5] bg-white">
        <table className="w-[556px] table-fixed border-collapse">
          <colgroup><col className="w-[22px]" /><col className="w-[81px]" /><col className="w-[81px]" /><col className="w-[65px]" /><col className="w-[206px]" /><col className="w-[101px]" /></colgroup>
          <thead>
            <tr className="h-5">
              <th className={cell + headBg} aria-label="序号" />
              <th className={cell + headBg}>筋号</th>
              <th className={cell + headBg}>钢筋信息</th>
              <th className={cell + headBg}>图号</th>
              <th className={cell + goldBg}>钢筋图形</th>
              <th className={cell + headBg}>长度(mm)</th>
            </tr>
          </thead>
          <tbody className="text-[11px]">
            <tr className="h-[31px]">
              <th className={cell + " bg-[#f8f8f8]"}>1</th>
              <td className={cell + " pl-px"}>1</td>
              <td className={cell + " pl-px"}><span className="flex items-center gap-[2px]">2<Rebar />6</span></td>
              <td className={cell + " pl-px"}>1</td>
              <td className={cell}>
                <svg className="block h-[30px] w-full" viewBox="0 0 205 30"><text x="107" y="17" textAnchor="middle" fontSize="11" fill="#ee0000">36000</text><path d="M5 24h195" stroke="#000" strokeWidth="2" /></svg>
              </td>
              <td className={cell + " pl-px"}>36000</td>
            </tr>
            <tr className="h-[31px]">
              <th className={cell + " bg-[#ffd48a] text-[#5b0050]"}>2</th>
              <td className={cell + " pl-px"}>2</td>
              <td className={cell + " pl-[3px]"}><span className="flex items-center gap-[2px]"><Rebar />6@250</span></td>
              <td className={cell + " pl-px"}>3</td>
              <td className={cell + " bg-[#dfefff]"}>
                <svg className="block h-[30px] w-full outline-1 -outline-offset-1 outline-black outline-dotted" viewBox="0 0 205 30"><text x="87" y="18" textAnchor="middle" fontSize="11" fill="#ee0000">150</text><path d="M13 20H9q-3 1-2 5h191v-5h-6" fill="none" stroke="#000" strokeWidth="2" /></svg>
              </td>
              <td className={cell + " pl-px"}>225</td>
            </tr>
            <tr className="h-[19px]">
              <th className={cell + " bg-[#f8f8f8]"}>3</th>
              <td className={cell} /><td className={cell} /><td className={cell} /><td className={cell} /><td className={cell} />
            </tr>
          </tbody>
        </table>
      </div>
      <footer className="flex h-[35px] bg-[#f0f0f0] pt-[3px] pr-1 pl-[17px]">
        <button className={dlgBtn + " w-[73px]"}>插入</button>
        <button className={dlgBtn + " ml-[23px] w-[73px]"}>删除</button>
        <button className={dlgBtn + " mr-[15px] ml-auto w-[72px]"}>确定</button>
        <button className={dlgBtn + " w-[72px]"}>取消</button>
      </footer>
      <div className="-ml-[3px] h-[3px] border-b border-[#3cb8cc]" />
    </div>
  );
}

function Overlays() {
  return (
    <>
      <div className="absolute -top-[55px] left-[1080px] size-[60px] rounded-full border-2 border-[#dcdcdc] bg-[#35c155] shadow-md" />
      <div className="absolute -top-2 left-[938px] h-10 w-[87px] rounded-lg border border-[#b4b4b4] bg-linear-to-b from-[#f4f4f4] to-[#d9d9d9] pt-[5px] pl-5 text-center leading-4 text-[#333] shadow">
        <p>64℃</p>
        <p>CPU温度</p>
      </div>
      <div className="absolute -top-4 left-[912px] flex size-[53px] items-center justify-center rounded-full border-[3px] border-[#d9e0e6] bg-linear-to-b from-[#1669bd] to-[#2a95e2] pt-[2px] font-['DejaVu_Sans',sans-serif] text-[13px] text-white shadow">
        <span>2.14<small className="text-[11px]">G</small></span>
      </div>
      <div className="absolute top-9 left-[1188px] w-[52px] bg-white shadow">
        <div className="flex h-[25px] items-center justify-between pl-[3px] text-[#999]">
          <span>Poi...</span>
          <button aria-label="关闭" className="mt-[-2px] size-5 bg-[#c6c6c6] text-[11px] leading-none text-white">x</button>
        </div>
        <button className="block h-[23px] w-full border-2 border-t-[#555] border-r-[#666] border-b-[#666] border-l-[#999] bg-[#f0f0f0]">开始</button>
      </div>
      <div className="absolute top-[83px] right-0 flex h-6 w-[176px] items-center justify-between border border-[#b9d3ec] bg-white pr-1 pl-6">
        <button className="text-[15px] leading-none font-bold text-[#2176d2]">英</button>
        {["moon", "punct", "keys", "person", "shirt", "wrench"].map((n) => <button key={n} aria-label={n}><Ico n={n} /></button>)}
      </div>
      <svg aria-hidden="true" className="absolute top-[79px] left-[1181px] size-[29px]" viewBox="0 0 29 29">
        <rect x="2.500" y="2.500" width="24" height="24" rx="4" fill="#f2541f" transform="rotate(-10 14.500 14.500)" />
        <text x="14.500" y="23" fontSize="25" fontStyle="italic" fontWeight="bold" textAnchor="middle" fontFamily="Liberation Sans" fill="#fff">S</text>
      </svg>
    </>
  );
}

export default function App() {
  return (
    <div className={UI + " relative flex h-screen flex-col overflow-hidden bg-[#f0f0f0] text-[12px] leading-4 text-black"}>
      <header className="flex h-[10px] shrink-0 items-end overflow-hidden bg-linear-to-b from-[#c5d5e6] to-[#d6e2ef] pl-[6px] text-[#8d9399]">
        <div className="flex items-end gap-[3px] pb-[2px]">
          <Ico n="app" />
          <h1 className="whitespace-nowrap">广联达BIM钢筋算量软件 GGJ2013 - &nbsp;&nbsp;[d:\Documents\GrandSoft Projects\GGJ\12.0\* F493.tmp]</h1>
        </div>
        <div className="mr-1 mb-1 ml-auto flex shrink-0 gap-[2px]">
          {["最小化", "最大化", "关闭"].map((l) => (
            <button key={l} aria-label={l} className="flex h-5 w-8 items-end justify-center rounded-sm border border-[#98a8b8] bg-[#cbd9e8] pb-[3px]"><span className="h-2 w-[10px] border border-[#7d8790] bg-[#eee]" /></button>
          ))}
        </div>
      </header>
      <MenuBar />
      <MainToolbar />
      <div className="flex min-h-0 flex-1 gap-[5px] pt-px">
        <NavPanel />
        <div className="flex min-w-0 flex-1 flex-col pt-[2px]">
          <PartToolbar />
          <div className="flex min-h-0 flex-1">
            <PartPanel />
            <PropertyPanel />
          </div>
        </div>
      </div>
      <RebarDialog />
      <Overlays />
    </div>
  );
}
